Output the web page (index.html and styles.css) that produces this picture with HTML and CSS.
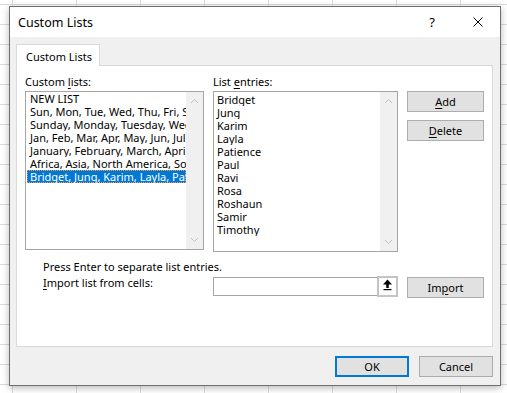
FILE: index.html
```html
<!DOCTYPE html>
<html lang="en">
<head>
    <meta charset="UTF-8">
    <title>Custom Lists</title>
    <link rel="stylesheet" href="styles.css">
</head>
<body>
<div class="dialog">
    <div class="titlebar">
        <span class="title">Custom Lists</span>
        <span class="help">?</span>
        <svg class="close" width="10" height="10" viewBox="0 0 10 10">
            <path d="M0.5 0.5 L9.5 9.5 M9.5 0.5 L0.5 9.5" stroke="#000" stroke-width="1" fill="none"/>
        </svg>
    </div>
    <div class="content">
        <div class="tab">Custom Lists</div>
        <div class="panel">
            <div class="lists-grid">
                <div class="label">Custom <u>l</u>ists:</div>
                <div class="label">List <u>e</u>ntries:</div>
                <div></div>

                <div class="listbox listbox-left">
                    <ul class="items">
                        <li>NEW LIST</li>
                        <li>Sun, Mon, Tue, Wed, Thu, Fri, Sat</li>
                        <li>Sunday, Monday, Tuesday, Wednesday, Thursday</li>
                        <li>Jan, Feb, Mar, Apr, May, Jun, Jul, Aug, Sep</li>
                        <li>January, February, March, April, May, June</li>
                        <li>Africa, Asia, North America, South America</li>
                        <li class="selected">Bridget, Jung, Karim, Layla, Patience, Paul</li>
                    </ul>
                    <div class="scrollbar">
                        <svg width="9" height="6" viewBox="0 0 9 6"><polyline points="1,5 4.5,1.5 8,5" stroke="#c2c2c2" fill="none"/></svg>
                        <svg width="9" height="6" viewBox="0 0 9 6"><polyline points="1,1 4.5,4.5 8,1" stroke="#c2c2c2" fill="none"/></svg>
                    </div>
                </div>

                <div class="listbox listbox-right">
                    <ul class="items entries">
                        <li>Bridget</li>
                        <li>Jung</li>
                        <li>Karim</li>
                        <li>Layla</li>
                        <li>Patience</li>
                        <li>Paul</li>
                        <li>Ravi</li>
                        <li>Rosa</li>
                        <li>Roshaun</li>
                        <li>Samir</li>
                        <li>Timothy</li>
                    </ul>
                    <div class="scrollbar">
                        <svg width="9" height="6" viewBox="0 0 9 6"><polyline points="1,5 4.5,1.5 8,5" stroke="#c2c2c2" fill="none"/></svg>
                        <svg width="9" height="6" viewBox="0 0 9 6"><polyline points="1,1 4.5,4.5 8,1" stroke="#c2c2c2" fill="none"/></svg>
                    </div>
                </div>

                <div class="side-buttons">
                    <button class="btn"><u>A</u>dd</button>
                    <button class="btn"><u>D</u>elete</button>
                </div>
            </div>

            <div class="note">Press Enter to separate list entries.</div>

            <div class="import-row">
                <div class="import-label"><u>I</u>mport list from cells:</div>
                <div class="ref-input">
                    <div class="ref-field"></div>
                    <div class="ref-button">
                        <svg width="17" height="16" viewBox="0 0 17 16">
                            <polygon points="8.5,1.5 4,6.5 13,6.5" fill="#000"/>
                            <rect x="7.25" y="6" width="2.5" height="4" fill="#000"/>
                            <rect x="4.5" y="11" width="8" height="1.2" fill="#000"/>
                        </svg>
                    </div>
                </div>
                <button class="btn import-btn">Im<u>p</u>ort</button>
            </div>
        </div>

        <div class="footer">
            <button class="btn btn-default">OK</button>
            <button class="btn">Cancel</button>
        </div>
    </div>
</div>
</body>
</html>
```

FILE: styles.css
```css
* {
    box-sizing: border-box;
}

body {
    margin: 0;
    padding: 6px 0 0 9px;
    width: 507px;
    height: 393px;
    overflow: hidden;
    font-family: "Noto Sans", "Open Sans", sans-serif;
    font-size: 11px;
    color: #000;
    background-color: #fff;
    background-image:
        linear-gradient(to right, #dadada 1px, transparent 1px),
        linear-gradient(to bottom, #dadada 1px, transparent 1px);
    background-size: 64px 20px;
    background-position: 12px 4px;
}

u {
    text-underline-offset: 2px;
}

.dialog {
    width: 492px;
    height: 380px;
    border: 1px solid #6f6f6f;
    background-color: #f0f0f0;
    box-shadow: 0 2px 7px rgba(0, 0, 0, 0.28);
    display: flex;
    flex-direction: column;
}

.titlebar {
    height: 30px;
    background-color: #fff;
    display: flex;
    align-items: center;
    padding-left: 8px;
}

.title {
    flex: 1;
    font-size: 12.5px;
}

.help {
    width: 20px;
    text-align: center;
    font-size: 13px;
    margin-right: 31px;
}

.close {
    margin-right: 17px;
}

.content {
    flex: 1;
    padding: 7px 7px 0 6px;
}

.tab {
    position: relative;
    z-index: 1;
    width: 84px;
    height: 22px;
    margin-bottom: -1px;
    padding: 4px 0 0 9px;
    line-height: 16px;
    background-color: #fff;
    border: 1px solid #d9d9d9;
    border-bottom: none;
}

.panel {
    height: 282px;
    padding: 8px 6px 0 8px;
    background-color: #fff;
    border: 1px solid #d9d9d9;
}

.lists-grid {
    display: grid;
    grid-template-columns: 179px 185px 77px;
    column-gap: 9px;
    align-items: start;
}

.label {
    height: 17px;
    line-height: 16px;
}

.listbox {
    display: flex;
    border: 1px solid #a5a5a5;
    background-color: #fff;
    overflow: hidden;
}

.listbox-left {
    height: 159px;
}

.listbox-right {
    height: 161px;
}

.items {
    flex: 1;
    min-width: 0;
    list-style: none;
    margin: 0;
    padding: 0;
}

.items li {
    height: 13px;
    line-height: 13px;
    margin-left: 1px;
    padding-left: 3px;
    white-space: nowrap;
    overflow: hidden;
}

.items li.selected {
    background-color: #0078d7;
    color: #fff;
    outline: 1px dotted #f59a3f;
    outline-offset: -1px;
}

.entries {
    padding-top: 1px;
}

.entries li {
    margin-left: 0;
}

.scrollbar {
    width: 17px;
    background-color: #f0f0f0;
    display: flex;
    flex-direction: column;
    justify-content: space-between;
    align-items: center;
    padding: 6px 0 6px;
}

.scrollbar svg {
    display: block;
}

.side-buttons {
    display: flex;
    flex-direction: column;
    gap: 8px;
}

.btn {
    height: 21px;
    padding: 0;
    font-family: inherit;
    font-size: 11px;
    color: #000;
    background-color: #e1e1e1;
    border: 1px solid #adadad;
}

.note {
    margin-top: 7px;
    padding-left: 18px;
    line-height: 16px;
}

.import-row {
    display: grid;
    grid-template-columns: 179px 185px 77px;
    column-gap: 9px;
    align-items: start;
}

.import-label {
    padding-left: 18px;
    line-height: 16px;
}

.ref-input {
    display: flex;
    height: 21px;
    margin-top: 1px;
}

.ref-field {
    flex: 1;
    margin: 1px 0;
    border: 1px solid #a5a5a5;
    border-right: none;
    background-color: #fff;
}

.ref-button {
    width: 21px;
    border: 2px solid #c4c4c4;
    background-color: #fff;
}

.ref-button svg {
    display: block;
}

.import-btn {
    margin-top: 2px;
}

.footer {
    display: flex;
    justify-content: flex-end;
    gap: 10px;
    margin-top: 9px;
}

.footer .btn {
    width: 74px;
}

.btn-default {
    border: 2px solid #0078d7;
}
```
